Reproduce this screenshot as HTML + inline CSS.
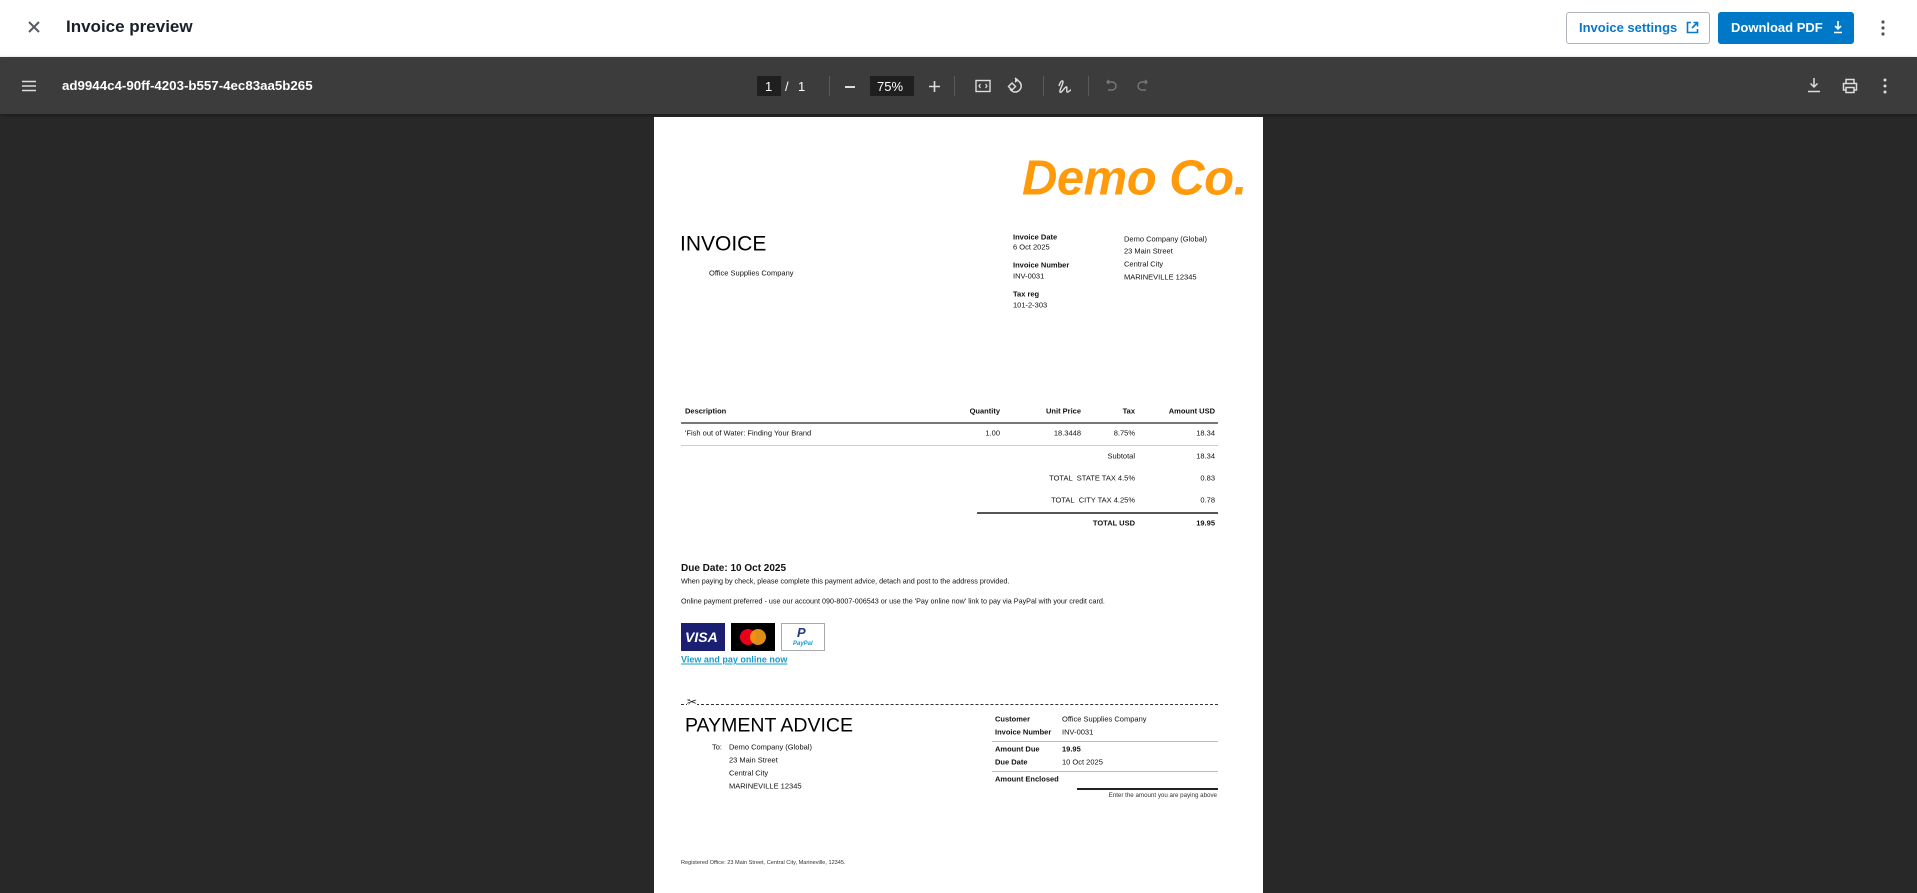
<!DOCTYPE html>
<html><head><meta charset="utf-8"><style>
*{margin:0;padding:0;box-sizing:border-box}
body{width:1917px;height:893px;overflow:hidden;background:#282828;font-family:"Liberation Sans",sans-serif;position:relative}
.a{position:absolute;white-space:nowrap;line-height:1}
#hdr{position:absolute;left:0;top:0;width:1917px;height:57px;background:#fff}
#tb{position:absolute;left:0;top:57px;width:1917px;height:57px;background:#3c3c3c;box-shadow:0 1px 3px rgba(0,0,0,.4)}
#pg{position:absolute;left:654px;top:117px;width:609px;height:776px;background:#fff}
.p{position:absolute;white-space:nowrap;line-height:1;font-size:8px;color:#111;transform:translateY(-50%)}
.b{font-weight:bold}
.r{text-align:right}
.sep{position:absolute;top:76px;width:1px;height:20px;background:#5a5a5a}
</style></head><body>
<div id="hdr">
 <svg class="a" style="left:27px;top:20px" width="14" height="14" viewBox="0 0 14 14"><path d="M2 2L12 12M12 2L2 12" stroke="#555b66" stroke-width="2"/></svg>
 <div class="a" style="left:66px;top:18px;font-size:17px;font-weight:bold;color:#1b1f2b">Invoice preview</div>
 <div class="a" style="left:1566px;top:12px;width:144px;height:32px;border:1px solid #b0b4bb;border-radius:3px;background:#fff"></div>
 <div class="a" style="left:1579px;top:21px;font-size:13px;font-weight:bold;color:#0a78c8">Invoice settings</div>
 <svg class="a" style="left:1686px;top:21px" width="13" height="13" viewBox="0 0 13 13"><path d="M5 1.5H1.5V11.5H11.5V8M7.5 1.5H11.5V5.5M11.5 1.5L6 7" stroke="#0a78c8" stroke-width="1.6" fill="none"/></svg>
 <div class="a" style="left:1718px;top:12px;width:136px;height:32px;border-radius:3px;background:#0078c8"></div>
 <div class="a" style="left:1731px;top:21px;font-size:13px;font-weight:bold;color:#fff">Download PDF</div>
 <svg class="a" style="left:1833px;top:20px" width="10" height="14" viewBox="0 0 10 14"><path d="M5 1V9M2 6L5 9L8 6M1 12.5H9" stroke="#fff" stroke-width="1.6" fill="none"/></svg>
 <svg class="a" style="left:1880px;top:19px" width="6" height="18" viewBox="0 0 6 18"><circle cx="3" cy="3" r="1.6" fill="#555"/><circle cx="3" cy="9" r="1.6" fill="#555"/><circle cx="3" cy="15" r="1.6" fill="#555"/></svg>
</div>
<div id="tb"></div>
<svg class="a" style="left:22px;top:80px" width="14" height="12" viewBox="0 0 14 12"><path d="M0 1.5H14M0 6H14M0 10.5H14" stroke="#ddd" stroke-width="1.6"/></svg>
<div class="a" style="left:62px;top:79px;font-size:13.3px;font-weight:bold;color:#fff">ad9944c4-90ff-4203-b557-4ec83aa5b265</div>
<div class="a" style="left:757px;top:76px;width:24px;height:20px;background:#1f1f1f"></div>
<div class="a" style="left:765px;top:80px;font-size:13px;color:#fff">1</div>
<div class="a" style="left:785px;top:80px;font-size:13px;color:#fff">/</div>
<div class="a" style="left:798px;top:80px;font-size:13px;color:#fff">1</div>
<div class="sep" style="left:829px"></div>
<div class="a" style="left:845px;top:86px;width:10px;height:1.6px;background:#ddd"></div>
<div class="a" style="left:870px;top:76px;width:44px;height:20px;background:#1f1f1f"></div>
<div class="a" style="left:877px;top:80px;font-size:13px;color:#fff">75%</div>
<svg class="a" style="left:929px;top:81px" width="11" height="11" viewBox="0 0 11 11"><path d="M5.5 0V11M0 5.5H11" stroke="#ddd" stroke-width="1.6"/></svg>
<div class="sep" style="left:954px"></div>
<svg class="a" style="left:975px;top:79px" width="16" height="14" viewBox="0 0 16 14"><rect x="1" y="1.5" width="14" height="11" fill="none" stroke="#ddd" stroke-width="1.4"/><path d="M5.5 5L4 7L5.5 9M10.5 5L12 7L10.5 9" stroke="#ddd" stroke-width="1.2" fill="none"/></svg>
<svg class="a" style="left:1006px;top:77px" width="18" height="18" viewBox="0 0 18 18"><path d="M9 3A6 6 0 1 1 4 12" stroke="#ddd" stroke-width="1.5" fill="none"/><path d="M9 1L11.5 3L9 5" stroke="#ddd" stroke-width="1.5" fill="none"/><rect x="3.5" y="7" width="5" height="5" transform="rotate(45 6 9.5)" fill="none" stroke="#ddd" stroke-width="1.4"/></svg>
<div class="sep" style="left:1043px"></div>
<svg class="a" style="left:1057px;top:77px" width="16" height="18" viewBox="0 0 16 18"><path d="M2 9C3 5 6 2 6 5C6 8 2 13 3 15C4 17 7 11 9 10C11 9 9 14 10 15C11 16 13 13 14 13" stroke="#ddd" stroke-width="1.4" fill="none"/></svg>
<div class="sep" style="left:1088px"></div>
<svg class="a" style="left:1104px;top:79px" width="13" height="13" viewBox="0 0 13 13"><path d="M3 3H8A4 4 0 0 1 8 11H4M5 1L3 3L5 5" stroke="#777" stroke-width="1.4" fill="none"/></svg>
<svg class="a" style="left:1137px;top:79px" width="13" height="13" viewBox="0 0 13 13"><path d="M10 3H5A4 4 0 0 0 5 11H9M8 1L10 3L8 5" stroke="#777" stroke-width="1.4" fill="none"/></svg>
<svg class="a" style="left:1807px;top:77px" width="14" height="16" viewBox="0 0 14 16"><path d="M7 1V10M3.5 6.5L7 10L10.5 6.5M1 14.5H13" stroke="#ddd" stroke-width="1.5" fill="none"/></svg>
<svg class="a" style="left:1842px;top:78px" width="16" height="16" viewBox="0 0 16 16"><path d="M4 5V1.5H12V5M4 12H1.5V5.5H14.5V12H12M4 9.5H12V14.5H4Z" stroke="#ddd" stroke-width="1.5" fill="none"/></svg>
<svg class="a" style="left:1882px;top:77px" width="6" height="18" viewBox="0 0 6 18"><circle cx="3" cy="3" r="1.5" fill="#ddd"/><circle cx="3" cy="9" r="1.5" fill="#ddd"/><circle cx="3" cy="15" r="1.5" fill="#ddd"/></svg>

<div id="pg">
 <div class="p" style="left:368px;top:62px;font-size:49px;font-weight:bold;font-style:italic;color:#ff9a0a;letter-spacing:-0.5px">Demo Co.</div>
 <div class="p" style="left:26px;top:127px;font-size:21px;color:#000">INVOICE</div>
 <div class="p" style="left:55px;top:156px;font-size:7.5px">Office Supplies Company</div>
 <div class="p b" style="left:359px;top:120px;font-size:7.5px">Invoice Date</div>
 <div class="p" style="left:359px;top:130px;font-size:7.5px">6 Oct 2025</div>
 <div class="p b" style="left:359px;top:148px;font-size:7.5px">Invoice Number</div>
 <div class="p" style="left:359px;top:159px;font-size:7.5px">INV-0031</div>
 <div class="p b" style="left:359px;top:177px;font-size:7.5px">Tax reg</div>
 <div class="p" style="left:359px;top:188px;font-size:7.5px">101-2-303</div>
 <div class="p" style="left:470px;top:122px;font-size:7.5px">Demo Company (Global)</div>
 <div class="p" style="left:470px;top:134px;font-size:7.5px">23 Main Street</div>
 <div class="p" style="left:470px;top:147px;font-size:7.5px">Central City</div>
 <div class="p" style="left:470px;top:160px;font-size:7.5px">MARINEVILLE 12345</div>

 <div class="p b" style="left:31px;top:294px;font-size:7.5px">Description</div>
 <div class="p b r" style="right:263px;top:294px;font-size:7.5px">Quantity</div>
 <div class="p b r" style="right:182px;top:294px;font-size:7.5px">Unit Price</div>
 <div class="p b r" style="right:128px;top:294px;font-size:7.5px">Tax</div>
 <div class="p b r" style="right:48px;top:294px;font-size:7.5px">Amount USD</div>
 <div class="a" style="left:27px;top:305px;width:537px;height:2px;background:#777"></div>
 <div class="p" style="left:31px;top:316px;font-size:7.5px">'Fish out of Water: Finding Your Brand</div>
 <div class="p r" style="right:263px;top:316px;font-size:7.5px">1.00</div>
 <div class="p r" style="right:182px;top:316px;font-size:7.5px">18.3448</div>
 <div class="p r" style="right:128px;top:316px;font-size:7.5px">8.75%</div>
 <div class="p r" style="right:48px;top:316px;font-size:7.5px">18.34</div>
 <div class="a" style="left:27px;top:328px;width:537px;height:1px;background:#ccc"></div>
 <div class="p r" style="right:128px;top:339px;font-size:7.5px">Subtotal</div>
 <div class="p r" style="right:48px;top:339px;font-size:7.5px">18.34</div>
 <div class="p r" style="right:128px;top:361px;font-size:7.5px">TOTAL&nbsp; STATE TAX 4.5%</div>
 <div class="p r" style="right:48px;top:361px;font-size:7.5px">0.83</div>
 <div class="p r" style="right:128px;top:383px;font-size:7.5px">TOTAL&nbsp; CITY TAX 4.25%</div>
 <div class="p r" style="right:48px;top:383px;font-size:7.5px">0.78</div>
 <div class="a" style="left:323px;top:395px;width:241px;height:2px;background:#555"></div>
 <div class="p b r" style="right:128px;top:406px;font-size:7.5px">TOTAL USD</div>
 <div class="p b r" style="right:48px;top:406px;font-size:7.5px">19.95</div>

 <div class="p b" style="left:27px;top:452px;font-size:10px">Due Date: 10 Oct 2025</div>
 <div class="p" style="left:27px;top:464px;font-size:7.2px">When paying by check, please complete this payment advice, detach and post to the address provided.</div>
 <div class="p" style="left:27px;top:484px;font-size:7.2px">Online payment preferred - use our account 090-8007-006543 or use the 'Pay online now' link to pay via PayPal with your credit card.</div>
 <div class="a" style="left:27px;top:506px;width:44px;height:28px;background:#1a1f71"></div>
 <div class="a" style="left:31px;top:513px;font-size:14px;font-weight:bold;font-style:italic;color:#fff">VISA</div>
 <div class="a" style="left:77px;top:506px;width:44px;height:28px;background:#000"></div>
 <div class="a" style="left:86px;top:512px;width:16px;height:16px;border-radius:50%;background:#eb001b"></div>
 <div class="a" style="left:96px;top:512px;width:16px;height:16px;border-radius:50%;background:#f79e1b;opacity:.9"></div>
 <div class="a" style="left:127px;top:506px;width:44px;height:28px;border:1px solid #aaa;background:#fff"></div>
 <div class="a" style="left:143px;top:509px;font-size:13px;font-weight:bold;font-style:italic;color:#253b80">P</div>
 <div class="a" style="left:139px;top:524px;font-size:6px;font-weight:bold;font-style:italic;color:#179bd7">PayPal</div>
 <div class="p b" style="left:27px;top:543px;font-size:9px;color:#1a9bc7;text-decoration:underline">View and pay online now</div>

 <div class="a" style="left:27px;top:587px;width:537px;border-top:1px dashed #333"></div>
 <div class="a" style="left:33px;top:579px;font-size:12px;background:#fff;color:#222;line-height:1">✂</div>
 <div class="p" style="left:31px;top:609px;font-size:19.5px;color:#000">PAYMENT ADVICE</div>
 <div class="p" style="left:58px;top:630px;font-size:7.5px">To:</div>
 <div class="p" style="left:75px;top:630px;font-size:7.5px">Demo Company (Global)</div>
 <div class="p" style="left:75px;top:643px;font-size:7.5px">23 Main Street</div>
 <div class="p" style="left:75px;top:656px;font-size:7.5px">Central City</div>
 <div class="p" style="left:75px;top:669px;font-size:7.5px">MARINEVILLE 12345</div>
 <div class="p b" style="left:341px;top:602px;font-size:7.5px">Customer</div>
 <div class="p" style="left:408px;top:602px;font-size:7.5px">Office Supplies Company</div>
 <div class="p b" style="left:341px;top:615px;font-size:7.5px">Invoice Number</div>
 <div class="p" style="left:408px;top:615px;font-size:7.5px">INV-0031</div>
 <div class="a" style="left:338px;top:624px;width:226px;height:1px;background:#bbb"></div>
 <div class="p b" style="left:341px;top:632px;font-size:7.5px">Amount Due</div>
 <div class="p b" style="left:408px;top:632px;font-size:7.5px">19.95</div>
 <div class="p b" style="left:341px;top:645px;font-size:7.5px">Due Date</div>
 <div class="p" style="left:408px;top:645px;font-size:7.5px">10 Oct 2025</div>
 <div class="a" style="left:338px;top:654px;width:226px;height:1px;background:#bbb"></div>
 <div class="p b" style="left:341px;top:662px;font-size:7.5px">Amount Enclosed</div>
 <div class="a" style="left:423px;top:671px;width:141px;height:1.5px;background:#222"></div>
 <div class="p r" style="right:46px;top:679px;font-size:6.2px;color:#333">Enter the amount you are paying above</div>
 <div class="p" style="left:27px;top:747px;font-size:5.6px;color:#333">Registered Office: 23 Main Street, Central City, Marineville, 12345.</div>
</div>
</body></html>
